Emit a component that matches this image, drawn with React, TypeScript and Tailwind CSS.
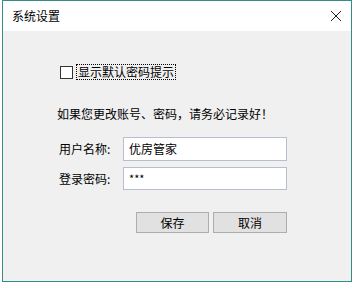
export default function App() {
  const font = { fontFamily: '"Microsoft YaHei", "Noto Sans CJK SC", sans-serif' }
  return (
    <div className="h-[283px] w-[354px] bg-white" style={font}>
      <div className="ml-[2px] flex h-[282px] w-[350px] flex-col border border-[#2f8f84]">
        {/* Title bar */}
        <div className="flex h-[30px] items-center justify-between bg-white pl-[9px] pr-[7px]">
          <span className="text-[12px] text-black">系统设置</span>
          <svg width="12" height="12" viewBox="0 0 12 12" className="mr-[2px]">
            <path d="M1 1 L11 11 M11 1 L1 11" stroke="#222" strokeWidth="1" />
          </svg>
        </div>

        {/* Body */}
        <div className="flex flex-1 flex-col bg-[#f0f0f0] text-[12px] text-black">
          <div className="ml-[57px] mt-[33px] flex items-center">
            <span className="h-[13px] w-[13px] border border-[#333] bg-white" />
            <span className="ml-[3px] border border-dotted border-black px-[1px] leading-[14px]">显示默认密码提示</span>
          </div>

          <div className="ml-[54px] mt-[26px] leading-[16px]">如果您更改账号、密码，请务必记录好！</div>

          <div className="ml-[56px] mt-[15px] flex items-center">
            <span className="w-[64px]">用户名称:</span>
            <div className="flex h-[24px] w-[164px] items-center border border-[#b5bfcd] bg-white px-[5px]">优房管家</div>
          </div>
          <div className="ml-[56px] mt-[6px] flex items-center">
            <span className="w-[64px]">登录密码:</span>
            <div className="flex h-[23px] w-[164px] items-center border border-[#b5bfcd] bg-white px-[5px] text-[11px]">***</div>
          </div>

          <div className="ml-[133px] mt-[22px] flex gap-[4px]">
            <button className="h-[21px] w-[73px] border border-[#adadad] bg-[#e1e1e1] text-[12px] leading-none">保存</button>
            <button className="h-[21px] w-[74px] border border-[#adadad] bg-[#e1e1e1] text-[12px] leading-none">取消</button>
          </div>
        </div>
      </div>
    </div>
  )
}
